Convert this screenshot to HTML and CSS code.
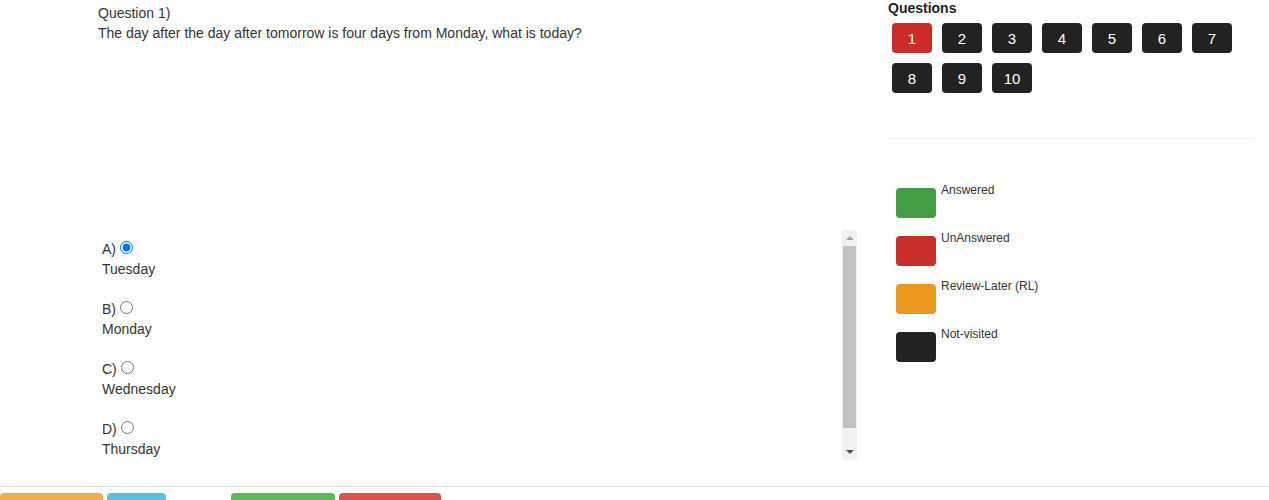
FILE: index.html
```html
<!DOCTYPE html>
<html>
<head>
<meta charset="utf-8">
<title>Quiz</title>
<link rel="stylesheet" href="styles.css">
</head>
<body>
<div class="page">
  <div class="main">
    <div class="left">
      <div class="q-head">Question 1)</div>
      <div class="q-text">The day after the day after tomorrow is four days from Monday, what is today?</div>
      <div class="options-wrap">
        <div class="options">
          <div class="option">
            <div class="opt-label">A)<input type="radio" name="ans" class="radio" checked></div>
            <div class="opt-text">Tuesday</div>
          </div>
          <div class="option">
            <div class="opt-label">B)<input type="radio" name="ans" class="radio"></div>
            <div class="opt-text">Monday</div>
          </div>
          <div class="option">
            <div class="opt-label">C)<input type="radio" name="ans" class="radio"></div>
            <div class="opt-text">Wednesday</div>
          </div>
          <div class="option">
            <div class="opt-label">D)<input type="radio" name="ans" class="radio"></div>
            <div class="opt-text">Thursday</div>
          </div>
        </div>
        <div class="scrollbar">
          <div class="sb-btn"><span class="tri-up"></span></div>
          <div class="sb-track"><div class="sb-thumb"></div></div>
          <div class="sb-btn"><span class="tri-down"></span></div>
        </div>
      </div>
    </div>
    <div class="right">
      <div class="q-title">Questions</div>
      <div class="q-grid">
        <div class="q-btn red">1</div>
        <div class="q-btn">2</div>
        <div class="q-btn">3</div>
        <div class="q-btn">4</div>
        <div class="q-btn">5</div>
        <div class="q-btn">6</div>
        <div class="q-btn">7</div>
        <div class="q-btn">8</div>
        <div class="q-btn">9</div>
        <div class="q-btn">10</div>
      </div>
      <div class="divider"></div>
      <div class="legend">
        <div class="legend-row"><span class="box green"></span><span class="legend-text">Answered</span></div>
        <div class="legend-row"><span class="box red"></span><span class="legend-text">UnAnswered</span></div>
        <div class="legend-row"><span class="box orange"></span><span class="legend-text">Review-Later (RL)</span></div>
        <div class="legend-row"><span class="box dark"></span><span class="legend-text">Not-visited</span></div>
      </div>
    </div>
  </div>
  <div class="footer">
    <div class="f-btn warning"></div>
    <div class="f-btn info"></div>
    <div class="f-btn success"></div>
    <div class="f-btn danger"></div>
  </div>
</div>
</body>
</html>
```

FILE: styles.css
```css
html, body {
  margin: 0;
  padding: 0;
  overflow: hidden;
  background: #fff;
}
body {
  font-family: "Liberation Sans", Arial, sans-serif;
  font-size: 14px;
  color: #333;
}
.page {
  width: 1269px;
  height: 500px;
  overflow: hidden;
}
.main {
  display: flex;
  height: 486px;
}
.left {
  width: 759px;
  padding-left: 98px;
  padding-top: 3px;
}
.q-head, .q-text {
  line-height: 20px;
}
.options-wrap {
  margin-top: 187px;
  height: 230px;
  display: flex;
}
.options {
  flex: 1;
  overflow: hidden;
  padding: 9px 0 0 4px;
}
.option {
  margin-bottom: 20px;
}
.opt-label, .opt-text {
  line-height: 20px;
}
.radio {
  margin: 0 0 0 4px;
  width: 13px;
  height: 13px;
}
.scrollbar {
  width: 15px;
  background: #f1f1f1;
  display: flex;
  flex-direction: column;
}
.sb-btn {
  height: 16px;
  display: flex;
  align-items: center;
  justify-content: center;
}
.tri-up {
  width: 0;
  height: 0;
  border-left: 4px solid transparent;
  border-right: 4px solid transparent;
  border-bottom: 4px solid #a3a3a3;
}
.tri-down {
  width: 0;
  height: 0;
  border-left: 4px solid transparent;
  border-right: 4px solid transparent;
  border-top: 4px solid #505050;
}
.sb-track {
  flex: 1;
  padding: 0 1px;
}
.sb-thumb {
  height: 182px;
  background: #c1c1c1;
}
.right {
  margin-left: 31px;
  width: 365px;
}
.q-title {
  font-weight: bold;
  line-height: 17px;
  color: #222;
  margin-bottom: 6px;
}
.q-grid {
  display: flex;
  flex-wrap: wrap;
  gap: 10px;
  padding-left: 4px;
}
.q-btn {
  width: 40px;
  height: 30px;
  border-radius: 4px;
  background: #222;
  color: #fff;
  font-size: 15px;
  display: flex;
  align-items: center;
  justify-content: center;
}
.q-btn.red {
  background: #cc2b2b;
}
.divider {
  margin-top: 45px;
  height: 1px;
  background: #eee;
}
.legend {
  margin-top: 43px;
  padding-left: 8px;
  display: flex;
  flex-direction: column;
  gap: 12px;
}
.legend-row {
  display: flex;
  align-items: flex-start;
}
.box {
  width: 40px;
  height: 30px;
  border-radius: 4px;
  margin-top: 6px;
  margin-right: 5px;
}
.legend-text {
  font-size: 12px;
  line-height: 17px;
}
.box.green { background: #449d44; }
.box.red { background: #c9302c; }
.box.orange { background: #ec971f; }
.box.dark { background: #222; }
.footer {
  border-top: 1px solid #e0e0e0;
  padding-top: 6px;
  display: flex;
}
.f-btn {
  height: 34px;
  border-radius: 4px;
}
.warning { background: #f0ad4e; width: 103px; }
.info { background: #5bc0de; width: 59px; margin-left: 4px; }
.success { background: #5cb85c; width: 104px; margin-left: 65px; }
.danger { background: #d9534f; width: 102px; margin-left: 4px; }
```
